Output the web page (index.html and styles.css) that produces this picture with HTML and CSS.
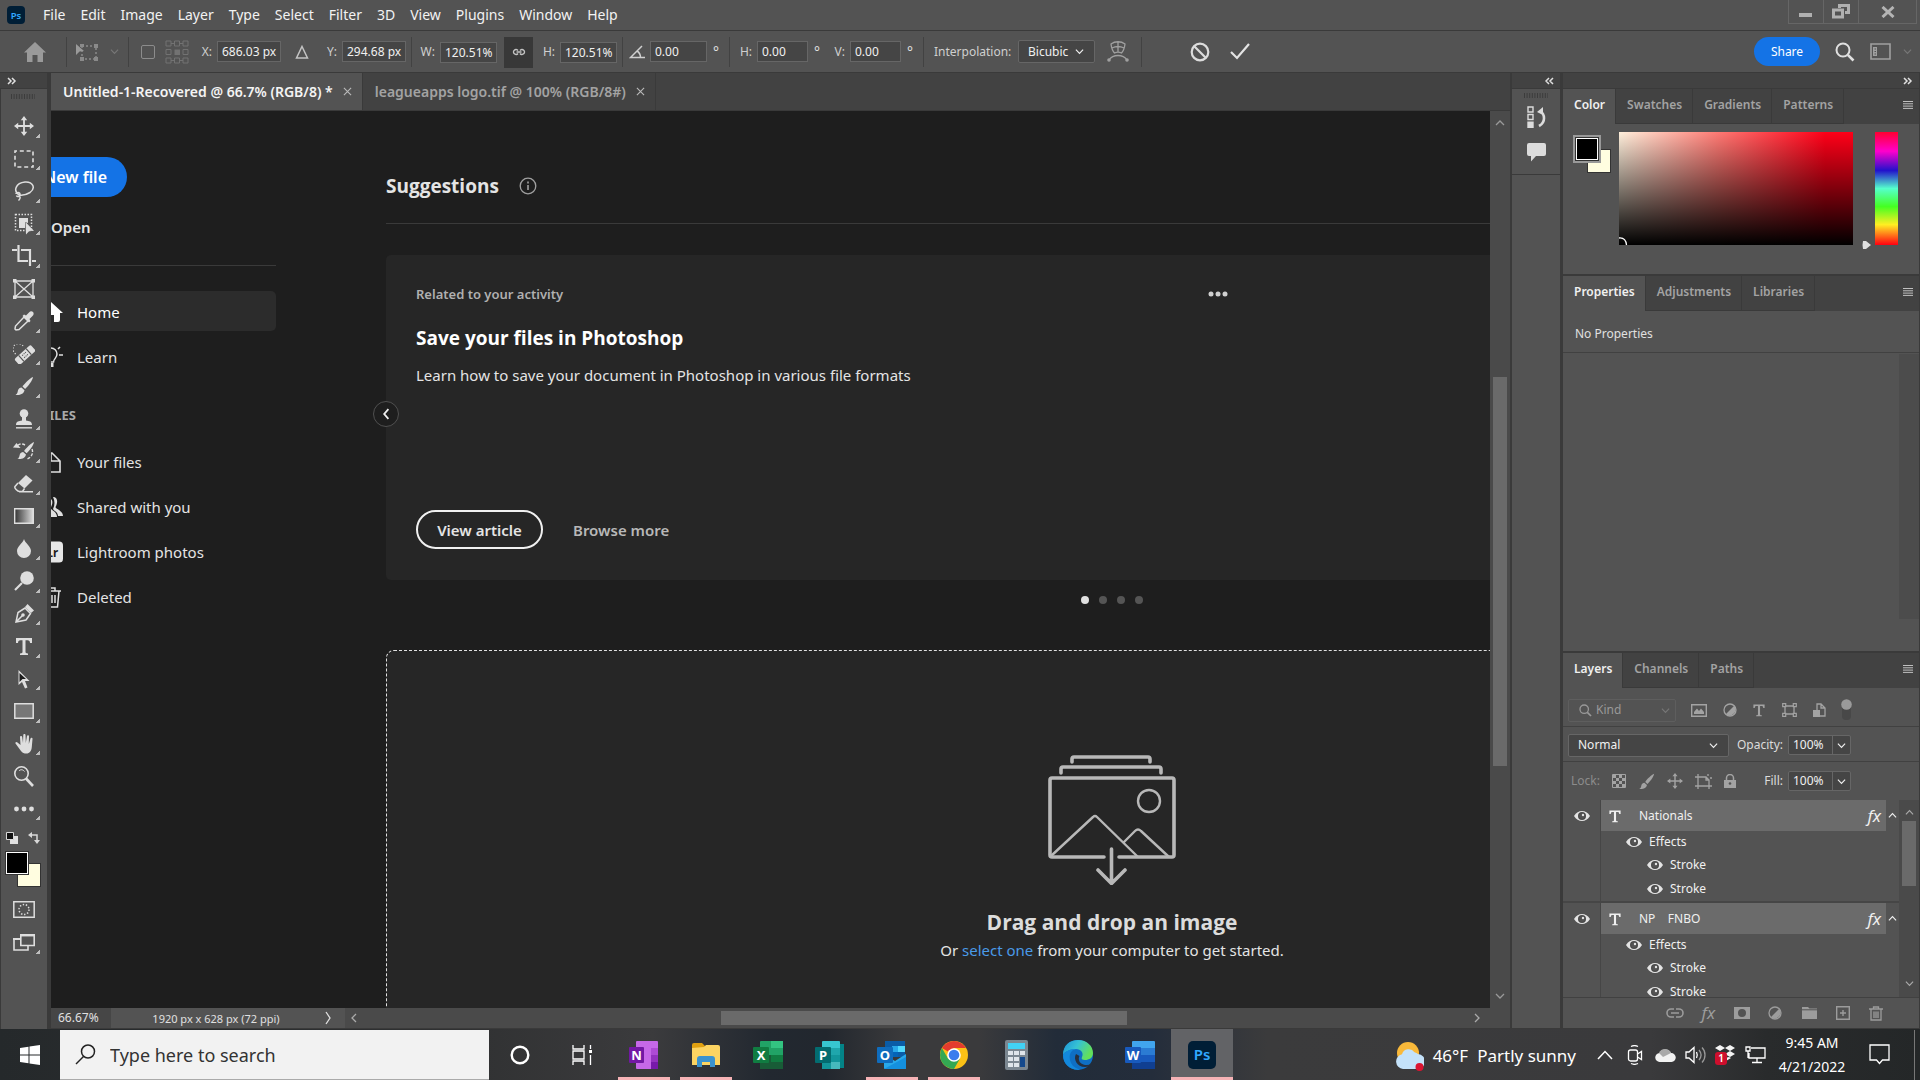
FILE: index.html
```html
<!DOCTYPE html>
<html lang="en">
<head>
<meta charset="utf-8">
<title>Untitled-1-Recovered @ 66.7% (RGB/8) *</title>
<link rel="stylesheet" href="styles.css">
</head>
<body>
<svg class="sprite" aria-hidden="true">
  <symbol id="chev-down" viewBox="0 0 10 10"><path d="M1 3l4 4 4-4" fill="none" stroke="currentColor" stroke-width="1.3"/></symbol>
  <symbol id="chev-up" viewBox="0 0 10 10"><path d="M1 7l4-4 4 4" fill="none" stroke="currentColor" stroke-width="1.3"/></symbol>
  <symbol id="chev-left" viewBox="0 0 10 10"><path d="M7 1L3 5l4 4" fill="none" stroke="currentColor" stroke-width="1.3"/></symbol>
  <symbol id="chev-right" viewBox="0 0 10 10"><path d="M3 1l4 4-4 4" fill="none" stroke="currentColor" stroke-width="1.3"/></symbol>
  <symbol id="dbl-right" viewBox="0 0 10 8"><path d="M1 1l3 3-3 3M5 1l3 3-3 3" fill="none" stroke="currentColor" stroke-width="1.5"/></symbol>
  <symbol id="dbl-left" viewBox="0 0 10 8"><path d="M4 1L1 4l3 3M8 1L5 4l3 3" fill="none" stroke="currentColor" stroke-width="1.5"/></symbol>
  <symbol id="close" viewBox="0 0 10 10"><path d="M1 1l8 8M9 1l-8 8" fill="none" stroke="currentColor" stroke-width="1.2"/></symbol>
  <symbol id="menu" viewBox="0 0 10 8"><path d="M0 .5h10M0 2.8h10M0 5.1h10M0 7.4h10" stroke="currentColor"/></symbol>
  <symbol id="grip" viewBox="0 0 24 5"><path d="M0 2.5h24" stroke="#3c3c3c" stroke-width="5" stroke-dasharray="1 1.6"/></symbol>
  <symbol id="eye" viewBox="0 0 16 12"><path d="M0 6C4-.8 12-.8 16 6c-4 6.800-12 6.800-16 0z" fill="#e4e4e4"/><circle cx="8" cy="6" r="4" fill="#4a4a4a"/><circle cx="8" cy="6" r="2.700" fill="#535353"/><circle cx="9" cy="5" r="1.200" fill="#e4e4e4"/></symbol>
  <symbol id="letter-t" viewBox="0 0 20 20"><path d="M2 2h16v5h-2c0-2-.8-2.800-2.500-2.800h-2V16c0 .9.500 1.300 2.500 1.400V19H6v-1.600c2-.1 2.500-.5 2.500-1.400V4.200h-2C4.800 4.200 4 5 4 7H2z" fill="currentColor"/></symbol>
  <symbol id="search" viewBox="0 0 20 20"><circle cx="8" cy="8" r="6.500" fill="none" stroke="currentColor" stroke-width="2"/><path d="M12.800 12.800L18.500 18.500" stroke="currentColor" stroke-width="2.600"/></symbol>
  <symbol id="adjust" viewBox="0 0 14 14"><circle cx="7" cy="7" r="6" fill="none" stroke="currentColor" stroke-width="1.300"/><path d="M11.200 2.800A6 6 0 0 1 2.800 11.200z" fill="currentColor"/></symbol>
  <symbol id="move" viewBox="0 0 20 20"><path d="M10 2v16M2 10h16" stroke="currentColor" stroke-width="1.800"/><path d="M10 0l3.200 4.200H6.800zM10 20l3.200-4.200H6.800zM0 10l4.200-3.200v6.400zM20 10l-4.200-3.200v6.400z" fill="currentColor"/></symbol>
  <symbol id="brush" viewBox="0 0 20 20"><path d="M19 1c-3 1-8.500 6.500-10.500 9.500l2.600 2.400C14 10.500 18.500 4.500 19 1z" fill="currentColor"/><path d="M7.500 11.500l3 2.700C10 18 5.500 19.500 1.500 18.800c2-1 2-2.500 2.500-4.500.4-1.700 2-2.800 3.500-2.800z" fill="currentColor"/></symbol>
</svg>

<header class="menubar">
  <svg class="app-badge" viewBox="0 0 18 18"><rect width="18" height="18" rx="4" fill="#001e36"/><text x="9" y="12.500" text-anchor="middle" class="badge-text" font-size="9.500">Ps</text></svg>
  <nav class="menu">
    <a href="#">File</a><a href="#">Edit</a><a href="#">Image</a><a href="#">Layer</a><a href="#">Type</a><a href="#">Select</a><a href="#">Filter</a><a href="#">3D</a><a href="#">View</a><a href="#">Plugins</a><a href="#">Window</a><a href="#">Help</a>
  </nav>
  <div class="window-controls">
    <button aria-label="Minimize"><svg width="14" height="14" viewBox="0 0 14 14"><rect x="0" y="8" width="13" height="4" fill="#b0b0b0"/></svg></button>
    <button aria-label="Restore"><svg width="18" height="15" viewBox="0 0 18 15"><path d="M7.500 4V1.500h9v7H13M1.500 6h9v7h-9z" fill="none" stroke="#b0b0b0" stroke-width="3"/></svg></button>
    <button class="wide" aria-label="Close"><svg width="14" height="12" viewBox="0 0 14 12"><path d="M1.500 1l11 10M12.500 1l-11 10" stroke="#b4b4b4" stroke-width="3"/></svg></button>
  </div>
</header>

<form class="options">
  <div class="opt-group opt-home"><button type="button" class="plain" aria-label="Home"><svg width="22" height="20" viewBox="0 0 22 20"><path d="M11 0l11 10.500h-3V20h-5.500v-7h-5v7H3v-9.500H0z" fill="#9a9a9a"/></svg></button></div>
  <div class="opt-group opt-tool">
    <svg width="22" height="18" viewBox="0 0 22 18"><path d="M6 3h14v13H6z" fill="none" stroke="#8a8a8a" stroke-width="1.500" stroke-dasharray="2 2"/><path d="M0 1l8 7-4.500.5L0 12z" fill="#9a9a9a"/><path d="M4 1h4v3H4zM18 1h4v4h-4zM18 14h4v4h-4zM4 14h4v4H4z" fill="#8a8a8a"/></svg>
    <svg class="dim" width="9" height="9"><use href="#chev-down"/></svg>
  </div>
  <div class="opt-group opt-ref">
    <input type="checkbox" aria-label="Toggle reference point">
    <svg width="24" height="24" viewBox="0 0 24 24"><g fill="none" stroke="#727272"><path d="M1 1h5v5H1zM9.500 1h5v5h-5zM18 1h5v5h-5zM1 9.500h5v5H1zM18 9.500h5v5h-5zM1 18h5v5H1zM9.500 18h5v5h-5zM18 18h5v5h-5zM6 3.500h3.500M14.500 3.500H18M6 20.500h3.500M14.500 20.500H18"/></g><path d="M9.500 9.500h5.500v5.500H9.500z" fill="#727272"/></svg>
    <label for="px">X:</label><input id="px" type="text" value="686.03 px">
    <svg width="14" height="14" viewBox="0 0 14 14"><path d="M7 1.500L12.500 13h-11z" fill="none" stroke="#c4c4c4" stroke-width="1.500"/></svg>
    <label for="py">Y:</label><input id="py" type="text" value="294.68 px">
  </div>
  <div class="opt-group opt-scale">
    <label for="sw">W:</label><input id="sw" type="text" value="120.51%">
    <button type="button" class="link-btn" aria-label="Maintain aspect ratio"><svg width="14" height="8" viewBox="0 0 14 8"><path d="M6 2.500A2.500 2.500 0 1 0 6 5.500M8 2.500a2.500 2.500 0 1 1 0 3M4.500 4h5" fill="none" stroke="#c4c4c4" stroke-width="1.400"/></svg></button>
    <label for="sh">H:</label><input id="sh" type="text" value="120.51%">
  </div>
  <div class="opt-group opt-angle">
    <svg width="16" height="14" viewBox="0 0 16 14"><path d="M13 1L1.500 12.500H16M8 6c2.500 1.500 3.500 4 3.500 6.500" fill="none" stroke="#d0d0d0" stroke-width="1.500"/></svg>
    <input type="text" value="0.00" aria-label="Angle"><span>°</span>
  </div>
  <div class="opt-group opt-skew">
    <label for="kh">H:</label><input id="kh" type="text" value="0.00"><span>°</span>
    <label for="kv">V:</label><input id="kv" type="text" value="0.00"><span>°</span>
  </div>
  <div class="opt-group opt-interp">
    <label for="interp">Interpolation:</label>
    <div class="select"><select id="interp"><option>Bicubic</option></select><svg width="9" height="9"><use href="#chev-down"/></svg></div>
    <svg width="22" height="21" viewBox="0 0 22 21"><g fill="none" stroke="#a0a0a0" stroke-width="1.300"><path d="M4 3c4-3 10-3 14 0-.5 4-1.500 7-3.500 9-2-1-5-1-7 0C5.500 10 4.500 7 4 3zM11 1v10.500M5 7c4-2 8-2 12 0M2 19c4-6 14-6 18 0"/></g><circle cx="2" cy="19" r="1.800" fill="#a0a0a0"/><circle cx="20" cy="19" r="1.800" fill="#a0a0a0"/></svg>
  </div>
  <div class="opt-group opt-commit">
    <button type="button" class="plain" aria-label="Cancel transform"><svg width="20" height="20" viewBox="0 0 20 20"><circle cx="10" cy="10" r="8.300" fill="none" stroke="#dcdcdc" stroke-width="2.200"/><path d="M4 4l12 12" stroke="#dcdcdc" stroke-width="2.200"/></svg></button>
    <button type="button" class="plain" aria-label="Commit transform"><svg width="20" height="17" viewBox="0 0 20 17"><path d="M1 9l6 6L19 1" fill="none" stroke="#e4e4e4" stroke-width="2.200"/></svg></button>
  </div>
  <div class="opt-end">
    <button type="button" class="share">Share</button>
    <button type="button" class="plain light" aria-label="Search"><svg width="20" height="20"><use href="#search"/></svg></button>
    <button type="button" class="plain workspace-btn" aria-label="Workspace"><svg width="21" height="17" viewBox="0 0 21 17"><path d="M1 1h19v15H1z" fill="none" stroke="#a0a0a0" stroke-width="1.600"/><path d="M3 4h4v9H3z" fill="#a0a0a0"/><path d="M4.500 6h1.500M4.500 8.500h1.500M4.500 11h1.500" stroke="#535353"/></svg><svg class="dim" width="9" height="9"><use href="#chev-down"/></svg></button>
  </div>
</form>

<div class="workspace">
  <aside class="toolbar">
    <div class="strip"><svg width="10" height="8"><use href="#dbl-right"/></svg></div>
    <div class="toolbox">
      <svg class="grip" width="24" height="5"><use href="#grip"/></svg>
      <ul class="tools">
        <li class="fly"><svg width="20" height="20"><use href="#move"/></svg></li>
        <li class="fly"><svg width="20" height="18" viewBox="0 0 20 18"><path d="M1 1h18v16H1z" fill="none" stroke="currentColor" stroke-width="1.600" stroke-dasharray="4 2.800" stroke-dashoffset="2"/></svg></li>
        <li class="fly"><svg width="20" height="20" viewBox="0 0 20 20"><path d="M5 14C-1 10 1.500 2 11 1c8-.5 11 6 5 10.500-4 2.500-8 3-11 2.500M2 13c0-2 4-2 4 .5S3 16 2.500 14.500M5 15c2 1 1 3-.5 4.500" fill="none" stroke="currentColor" stroke-width="1.500"/></svg></li>
        <li class="fly"><svg width="20" height="22" viewBox="0 0 20 22"><path d="M1.500 1.500h16v16h-16z" fill="none" stroke="currentColor" stroke-width="1.500" stroke-dasharray="1.500 1.500"/><path d="M5 5h9v5l-3-1v6H5z" fill="currentColor"/><path d="M11.500 9l8.500 9-4.500-.3L12 21.500z" fill="currentColor"/></svg></li>
        <li class="fly"><svg width="24" height="22" viewBox="0 0 24 22"><path d="M6.500 0v16H16M0 5h5M9 5h9v16M20 16h4" fill="none" stroke="currentColor" stroke-width="2.200"/></svg></li>
        <li><svg width="22" height="20" viewBox="0 0 22 20"><path d="M2 2h18v16H2zM2 2l18 16M20 2L2 18" fill="none" stroke="currentColor" stroke-width="1.300"/><path d="M0 0h3.500v3.500H0zM18.500 0H22v3.500h-3.500zM0 16.500h3.500V20H0zM18.500 16.500H22V20h-3.500z" fill="currentColor"/></svg></li>
        <li class="fly"><svg width="20" height="20" viewBox="0 0 20 20"><path d="M10 6l4 4-9 8.500-3 .5-1-1 .5-3z" fill="none" stroke="currentColor" stroke-width="1.500"/><path d="M8.500 5l1.500-1.500 2 1L15 1.500C16 0 18-.2 19 1s.8 3-.5 4L15.500 8l1 2L15 11.500z" fill="currentColor"/></svg></li>
        <li class="fly"><svg width="22" height="20" viewBox="0 0 22 20"><path d="M10 2A5.500 5.500 0 1 0 3 10" fill="none" stroke="currentColor" stroke-width="1.300" stroke-dasharray="1.200 1.800"/><g transform="rotate(-42 12 11)"><rect x="1" y="7" width="22" height="8" rx="2" fill="currentColor"/><path d="M7 7v8M17 7v8" stroke="#535353" stroke-width="1.200"/><path d="M9.500 9.500h5M9.500 12.500h5" stroke="#535353" stroke-dasharray="1.200 .8"/></g></svg></li>
        <li class="fly"><svg width="20" height="20"><use href="#brush"/></svg></li>
        <li class="fly"><svg width="18" height="20" viewBox="0 0 18 20"><circle cx="9" cy="4.500" r="4.300" fill="currentColor"/><path d="M7 8h4v3.500c3 .8 6 .5 6 4.500H1c0-4 3-3.700 6-4.500z" fill="currentColor"/><path d="M1 18.800h16" stroke="currentColor" stroke-width="1.400"/></svg></li>
        <li class="fly"><svg width="22" height="20" viewBox="0 0 22 20"><g transform="translate(3 0)"><use href="#brush" width="19" height="19"/></g><path d="M12 4C8 2 5 3 4 6M19 8c1.500 4 0 8-5 10" fill="none" stroke="currentColor" stroke-width="1.400" stroke-dasharray="3 1.500"/><path d="M0 6.500L3.500 2l4 5z" fill="currentColor"/></svg></li>
        <li class="fly"><svg width="20" height="18" viewBox="0 0 20 18"><path d="M12 0l6.500 5.500-8 8L4 8z" fill="currentColor"/><path d="M4 8L1 11.500c-1 1.500 2.500 5 4.500 5h3l2-3M5 16.700h14" fill="none" stroke="currentColor" stroke-width="1.500"/></svg></li>
        <li class="fly"><svg width="20" height="16" viewBox="0 0 20 16"><defs><linearGradient id="gr"><stop stop-color="#333"/><stop offset="1" stop-color="#ddd"/></linearGradient></defs><path d="M.7.700h18.600v14.600H.7z" fill="url(#gr)" stroke="currentColor" stroke-width="1.400"/></svg></li>
        <li class="fly"><svg width="14" height="19" viewBox="0 0 14 19"><path d="M7 0c1 4 7 7.500 7 12a7 7 0 0 1-14 0C0 7.500 6 4 7 0z" fill="currentColor"/></svg></li>
        <li class="fly"><svg width="20" height="20" viewBox="0 0 20 20"><circle cx="13" cy="7" r="6.800" fill="currentColor"/><path d="M8 12l-7 7" stroke="currentColor" stroke-width="2.200"/></svg></li>
        <li class="fly"><svg width="20" height="20" viewBox="0 0 20 20"><path d="M2 18L4 8.500l7-4.500 5.500 5.500L12 16zM2 18l6.500-6.500" fill="none" stroke="currentColor" stroke-width="1.500"/><circle cx="9" cy="11" r="1.800" fill="currentColor"/><path d="M11 3l2.500-3L20 6.500l-3 2.500z" fill="currentColor"/></svg></li>
        <li class="fly"><svg width="20" height="20"><use href="#letter-t"/></svg></li>
        <li class="fly"><svg width="14" height="20" viewBox="0 0 14 20"><path d="M1.500 1v15l3.500-3 3 6.500 2.500-1L8 12h4.500z" fill="currentColor"/><path d="M2.500 4v9l3-3H9z" fill="#1c1c1c"/></svg></li>
        <li class="fly"><svg width="20" height="16" viewBox="0 0 20 16"><path d="M.8.800h18.400v14.400H.8z" fill="#777" stroke="currentColor" stroke-width="1.500"/></svg></li>
        <li class="fly"><svg width="19" height="20" viewBox="0 0 19 20"><path d="M6 17L.5 9.500C0 8 1.500 7.500 2.500 8.500L5.500 11 5 3c0-1.500 2-1.500 2.200 0L8 9l.3-8c0-1.300 2.200-1.300 2.200 0l.3 8L12 2c.2-1.300 2.100-1 2 .3L13.800 10l1.700-5.500c.4-1.200 2.200-.8 2 .5L16.800 13c-.3 4-2.300 6.500-5.300 6.500-2.500 0-4-.5-5.500-2.500z" fill="currentColor"/></svg></li>
        <li><svg width="20" height="21" viewBox="0 0 20 21"><circle cx="7.500" cy="7.500" r="6.700" fill="none" stroke="currentColor" stroke-width="1.600"/><path d="M5 5c1.500-2 4-1.500 5.500.5" fill="none" stroke="currentColor"/><path d="M12 12.500l7 7.500" stroke="currentColor" stroke-width="2.600"/></svg></li>
        <li class="fly"><svg width="20" height="6" viewBox="0 0 20 6"><g fill="currentColor"><circle cx="2.500" cy="3" r="2.400"/><circle cx="10" cy="3" r="2.400"/><circle cx="17.500" cy="3" r="2.400"/></g></svg></li>
      </ul>
      <div class="swap-row">
        <svg width="12" height="12" viewBox="0 0 12 12"><path d="M4 4h8v8H4z" fill="#e0e0e0"/><path d="M.5.500h7v7h-7z" fill="#111" stroke="#d8d8d8"/></svg>
        <svg width="12" height="12" viewBox="0 0 12 12"><path d="M2 3h7v7" fill="none" stroke="#d8d8d8" stroke-width="1.500"/><path d="M0 3l4-3v6zM9 12L6 8h6z" fill="#d8d8d8"/></svg>
      </div>
      <div class="swatches"><span class="bg"></span><span class="fg"></span></div>
      <ul class="modes">
        <li><svg width="22" height="17" viewBox="0 0 22 17"><path d="M.8.800h20.400v15.400H.8z" fill="none" stroke="currentColor" stroke-width="1.500"/><circle cx="11" cy="8.500" r="5" fill="none" stroke="currentColor" stroke-width="1.500" stroke-dasharray="1.400 1.700"/></svg></li>
        <li class="fly"><svg width="22" height="17" viewBox="0 0 22 17"><path d="M7 5H1v11h14v-4" fill="none" stroke="currentColor" stroke-width="1.600"/><path d="M7.800 1.500h13.400v10H7.800z" fill="none" stroke="currentColor" stroke-width="1.600"/><path d="M7 1.200h15M0 5h7" stroke="currentColor" stroke-width="2.200"/></svg></li>
      </ul>
    </div>
  </aside>

  <main class="document">
    <div class="doc-tabs">
      <div class="doc-tab active"><span>Untitled-1-Recovered @ 66.7% (RGB/8) *</span><button class="plain" aria-label="Close tab"><svg width="9" height="9"><use href="#close"/></svg></button></div>
      <div class="doc-tab"><span>leagueapps logo.tif @ 100% (RGB/8#)</span><button class="plain" aria-label="Close tab"><svg width="9" height="9"><use href="#close"/></svg></button></div>
    </div>
    <div class="doc-view">
      <div class="canvas">
        <nav class="home-nav">
          <button class="new-file">New file</button>
          <button class="open-file">Open</button>
          <hr>
          <a class="current" href="#"><svg width="24" height="20" viewBox="0 0 24 20"><path d="M12 0l12 11h-3v7q0 2-2 2h-4v-7H9v7H5q-2 0-2-2v-7H0z" fill="#fff"/></svg>Home</a>
          <a href="#"><svg width="24" height="22" viewBox="0 0 24 22"><path d="M9.500 16c0-3-3.500-4-3.500-8a6 6 0 0 1 12 0c0 4-3.500 5-3.500 8z" fill="none" stroke="#e0e0e0" stroke-width="1.500"/><path d="M9.500 17h5v4h-5z" fill="#e0e0e0"/><path d="M19 3l2-2M20 9h4" stroke="#e0e0e0" stroke-width="1.600"/></svg>Learn</a>
          <h2>FILES</h2>
          <a href="#"><svg width="24" height="21" viewBox="0 0 24 21"><path d="M4 1h9l8 8v11H4zM12 1v8h9" fill="none" stroke="#e0e0e0" stroke-width="1.600"/></svg>Your files</a>
          <a href="#"><svg width="24" height="20" viewBox="0 0 24 20"><path d="M14 0c5 0 5 6 2.500 10 0 2 7.500 3.500 7.500 9h-5c0-4-4-5-5-7 2-4 2-8 0-12z" fill="#e0e0e0"/><path d="M8 1c7 0 6 6 3.500 10 0 2 6.500 3 6.500 9H0c0-6 4-7 4-9C1 7 2 1 8 1z" fill="#e0e0e0"/></svg>Shared with you</a>
          <a href="#"><svg width="25" height="22" viewBox="0 0 25 22"><rect width="25" height="22" rx="4" fill="#e6e6e6"/><text x="20" y="16" text-anchor="end" class="lr-text">Lr</text></svg>Lightroom photos</a>
          <a href="#"><svg width="24" height="21" viewBox="0 0 24 21"><path d="M4 4h18M9 4V1h7v3M5.500 4l1 16h12l1.500-16M10 8v8M13 8v8M16 8v8" fill="none" stroke="#e0e0e0" stroke-width="1.500"/></svg>Deleted</a>
        </nav>
        <section class="home-main">
          <div class="suggest-head"><h1>Suggestions</h1><svg width="18" height="18" viewBox="0 0 18 18"><circle cx="9" cy="9" r="7.800" fill="none" stroke="#a0a0a0" stroke-width="1.300"/><path d="M9 8v5M9 4.500v2" stroke="#a0a0a0" stroke-width="1.600"/></svg></div>
          <article class="card">
            <button class="prev" aria-label="Previous"><svg width="12" height="12" viewBox="0 0 10 10"><path d="M7 1L3.500 5 7 9" fill="none" stroke="#f0f0f0" stroke-width="1.500"/></svg></button>
            <div class="card-top"><span>Related to your activity</span><button class="plain" aria-label="More"><svg width="20" height="6" viewBox="0 0 20 6"><g fill="#d0d0d0"><circle cx="3" cy="3" r="2.500"/><circle cx="10" cy="3" r="2.500"/><circle cx="17" cy="3" r="2.500"/></g></svg></button></div>
            <h2>Save your files in Photoshop</h2>
            <p>Learn how to save your document in Photoshop in various file formats</p>
            <div class="card-actions"><button class="outline">View article</button><button class="quiet">Browse more</button></div>
          </article>
          <div class="pager"><i class="on"></i><i></i><i></i><i></i></div>
          <div class="dropzone">
            <svg width="128" height="130" viewBox="0 0 128 130"><g fill="none" stroke="#b8b8b8" stroke-linecap="round" stroke-linejoin="round" stroke-width="3.600"><path d="M24 7V4q0-2 2-2h74q2 0 2 2v3M13 18v-4q0-2 2-2h96q2 0 2 2v4"/><path d="M56 102H4q-2 0-2-2V25q0-2 2-2h120q2 0 2 2v75q0 2-2 2H71"/><path d="M63.500 94v34M50 115l13.500 13.500L77 115"/></g><g fill="none" stroke="#b8b8b8" stroke-width="2.400" stroke-linejoin="round"><circle cx="101" cy="46" r="11"/><path d="M3 101L45 62q2-2 4 0l41 40M76 87l11-11q3-3 6 0l28 26"/></g></svg>
            <h2>Drag and drop an image</h2>
            <p>Or <a href="#">select one</a> from your computer to get started.</p>
          </div>
        </section>
      </div>
      <div class="vscroll"><svg width="10" height="10"><use href="#chev-up"/></svg><div class="vtrack"><div class="vthumb"></div></div><svg width="10" height="10"><use href="#chev-down"/></svg></div>
    </div>
    <div class="statusbar">
      <span class="zoom">66.67%</span><span class="info">1920 px x 628 px (72 ppi)</span><span class="more"><svg width="9" height="14" viewBox="0 0 9 14"><path d="M2 1l4 6-4 6" fill="none" stroke="currentColor" stroke-width="1.300"/></svg></span>
      <div class="hscroll"><svg width="10" height="10"><use href="#chev-left"/></svg><div class="htrack"><div class="hthumb"></div></div><svg width="10" height="10"><use href="#chev-right"/></svg></div>
    </div>
  </main>

  <aside class="dock">
    <div class="strip end"><svg width="10" height="8"><use href="#dbl-left"/></svg></div>
    <div class="dock-icons">
      <svg width="24" height="5"><use href="#grip"/></svg>
      <svg width="19" height="22" viewBox="0 0 19 22"><path d="M1 1h5v5H1zM1 8.500h5v5H1z" fill="none" stroke="#dcdcdc" stroke-width="1.400"/><path d="M.3 15.500h6.400V22H.3z" fill="#dcdcdc"/><path d="M12 20c7-4 6-12 1-15" fill="none" stroke="#dcdcdc" stroke-width="2.600"/><path d="M10 6l6-5v8z" fill="#dcdcdc"/></svg>
      <svg width="19" height="19" viewBox="0 0 19 19"><path d="M2 0h15q2 0 2 2v9q0 2-2 2h-8l-5 5.500V13H2q-2 0-2-2V2q0-2 2-2z" fill="#dcdcdc"/></svg>
    </div>
    <div class="dock-rest"></div>
  </aside>

  <aside class="panels">
    <div class="strip end"><svg width="10" height="8"><use href="#dbl-right"/></svg></div>
    <section class="panel color-panel">
      <div class="tabs"><button class="active">Color</button><button>Swatches</button><button>Gradients</button><button>Patterns</button><svg width="10" height="8"><use href="#menu"/></svg></div>
      <div class="color-body">
        <div class="swatches framed"><span class="bg"></span><span class="fg"></span></div>
        <div class="ramp"><svg width="9" height="8" viewBox="0 0 9 8"><path d="M0 1c5-.5 7 2 7.500 7" fill="none" stroke="#fff" stroke-width="1.300"/></svg></div>
        <svg class="hue-pointer" width="10" height="10" viewBox="0 0 10 10"><path d="M1 1h3l5 4-5 4H1q-1-4 0-8z" fill="#e0e0e0"/></svg>
        <div class="hue"></div>
      </div>
    </section>
    <section class="panel props-panel">
      <div class="tabs"><button class="active">Properties</button><button>Adjustments</button><button>Libraries</button><svg width="10" height="8"><use href="#menu"/></svg></div>
      <p>No Properties</p>
      <div class="props-body"><div></div></div>
    </section>
    <section class="panel layers-panel">
      <div class="tabs"><button class="active">Layers</button><button>Channels</button><button>Paths</button><svg width="10" height="8"><use href="#menu"/></svg></div>
      <div class="filter-row">
        <div class="kind"><svg width="13" height="13"><use href="#search"/></svg><select aria-label="Filter kind"><option>Kind</option></select><svg width="9" height="9"><use href="#chev-down"/></svg></div>
        <div class="icons">
          <svg width="16" height="13" viewBox="0 0 16 13"><path d="M.7.700h14.600v11.600H.7z" fill="none" stroke="currentColor" stroke-width="1.400"/><path d="M3 10V8l3-3.500L8 7l2-2.500L13 8v2z" fill="currentColor"/></svg>
          <svg width="14" height="14"><use href="#adjust"/></svg>
          <svg width="14" height="14"><use href="#letter-t"/></svg>
          <svg width="15" height="14" viewBox="0 0 15 14"><path d="M3 3h9v8H3z" fill="none" stroke="currentColor" stroke-width="1.300"/><path d="M.7.700h3v3h-3zM11.300.700h3v3h-3zM.7 10.300h3v3h-3zM11.300 10.300h3v3h-3z" fill="#535353" stroke="currentColor" stroke-width="1.200"/></svg>
          <svg width="14" height="14" viewBox="0 0 14 14"><path d="M5 7V1h4l4 4v8H8M9 1v4h4" fill="none" stroke="currentColor" stroke-width="1.300"/><path d="M1 7h7v7H1z" fill="currentColor"/></svg>
        </div>
        <svg width="11" height="22" viewBox="0 0 11 22"><rect x="1" y="4" width="9" height="17" rx="4" fill="#484848"/><circle cx="5.500" cy="5.500" r="5.300" fill="#9a9a9a"/></svg>
      </div>
      <div class="blend-row">
        <div class="select"><select aria-label="Blend mode"><option>Normal</option></select><svg width="9" height="9"><use href="#chev-down"/></svg></div>
        <label for="opacity">Opacity:</label>
        <div class="combo"><input id="opacity" type="text" value="100%"><button aria-label="Opacity slider"><svg width="9" height="9"><use href="#chev-down"/></svg></button></div>
      </div>
      <div class="lock-row">
        <span>Lock:</span>
        <div class="icons">
          <svg width="14" height="14" viewBox="0 0 14 14"><path d="M.5.500h13v13H.5z" fill="none" stroke="currentColor"/><path d="M1 1h3v3H1zM7 1h3v3H7zM4 4h3v3H4zM10 4h3v3h-3zM1 7h3v3H1zM7 7h3v3H7zM4 10h3v3H4zM10 10h3v3h-3z" fill="currentColor"/></svg>
          <svg width="17" height="17"><use href="#brush"/></svg>
          <svg width="16" height="16"><use href="#move"/></svg>
          <svg width="17" height="15" viewBox="0 0 17 15"><path d="M3 0v15M0 3h11l3 3v9M0 12h17M11 3v3h3" fill="none" stroke="currentColor" stroke-width="1.300"/><path d="M13 0v2M15 4h2" stroke="currentColor" stroke-width="1.300"/></svg>
          <svg width="12" height="14" viewBox="0 0 12 14"><path d="M0 6h12v8H0z" fill="currentColor"/><path d="M2.500 6V4a3.500 3.500 0 0 1 7 0v2" fill="none" stroke="currentColor" stroke-width="1.500"/><circle cx="6" cy="9.500" r="1.300" fill="#535353"/></svg>
        </div>
        <label for="fill">Fill:</label>
        <div class="combo"><input id="fill" type="text" value="100%"><button aria-label="Fill slider"><svg width="9" height="9"><use href="#chev-down"/></svg></button></div>
      </div>
      <div class="layers">
        <ul class="layer-list">
          <li class="layer">
            <div class="vis"><svg width="16" height="12"><use href="#eye"/></svg></div>
            <div class="layer-body">
              <div class="layer-row"><svg width="14" height="14"><use href="#letter-t"/></svg><span>Nationals</span><em>fx</em><svg class="caret" width="9" height="9"><use href="#chev-up"/></svg></div>
              <div class="fx-row head"><svg width="16" height="12"><use href="#eye"/></svg>Effects</div>
              <div class="fx-row"><svg width="16" height="12"><use href="#eye"/></svg>Stroke</div>
              <div class="fx-row"><svg width="16" height="12"><use href="#eye"/></svg>Stroke</div>
            </div>
          </li>
          <li class="layer">
            <div class="vis"><svg width="16" height="12"><use href="#eye"/></svg></div>
            <div class="layer-body">
              <div class="layer-row"><svg width="14" height="14"><use href="#letter-t"/></svg><span>NP    FNBO</span><em>fx</em><svg class="caret" width="9" height="9"><use href="#chev-up"/></svg></div>
              <div class="fx-row head"><svg width="16" height="12"><use href="#eye"/></svg>Effects</div>
              <div class="fx-row"><svg width="16" height="12"><use href="#eye"/></svg>Stroke</div>
              <div class="fx-row"><svg width="16" height="12"><use href="#eye"/></svg>Stroke</div>
            </div>
          </li>
        </ul>
        <div class="list-scroll"><svg width="9" height="9"><use href="#chev-up"/></svg><div></div><svg width="9" height="9"><use href="#chev-down"/></svg></div>
      </div>
      <div class="layer-actions">
        <button class="plain" aria-label="Link layers"><svg width="18" height="10" viewBox="0 0 18 10"><path d="M8 1H5a4 4 0 0 0 0 8h3M10 1h3a4 4 0 0 1 0 8h-3M5 5h8" fill="none" stroke="currentColor" stroke-width="1.600"/></svg></button>
        <button class="plain fx" aria-label="Layer style">fx</button>
        <button class="plain" aria-label="Add mask"><svg width="16" height="12" viewBox="0 0 16 12"><path d="M0 0h16v12H0zM8 2a4 4 0 1 0 0 8 4 4 0 1 0 0-8z" fill="currentColor" fill-rule="evenodd"/></svg></button>
        <button class="plain" aria-label="Adjustment layer"><svg width="14" height="14"><use href="#adjust"/></svg></button>
        <button class="plain" aria-label="New group"><svg width="15" height="12" viewBox="0 0 15 12"><path d="M0 0h6l1.500 1.500H15V12H0z" fill="currentColor"/><path d="M0 2.800h15" stroke="#535353"/></svg></button>
        <button class="plain" aria-label="New layer"><svg width="14" height="14" viewBox="0 0 14 14"><path d="M.7.700h12.600v12.600H.7zM7 4v6M4 7h6" fill="none" stroke="currentColor" stroke-width="1.400"/></svg></button>
        <button class="plain" aria-label="Delete layer"><svg width="14" height="15" viewBox="0 0 14 15"><path d="M0 3h14M4.500 3V1h5v2M2 3v11h10V3M5 5.500V12M7 5.500V12M9 5.500V12" fill="none" stroke="currentColor" stroke-width="1.300"/></svg></button>
      </div>
    </section>
  </aside>
</div>

<footer class="taskbar">
  <button class="start" aria-label="Start"><svg width="20" height="20" viewBox="0 0 20 20"><path d="M0 3l8.500-1.300v7.800H0zM9.500 1.500L20 0v9.500H9.500zM0 10.500h8.500v7.800L0 17zM9.500 10.500H20V20L9.500 18.500z" fill="#fff"/></svg></button>
  <label class="search"><svg width="21" height="21" viewBox="0 0 21 21"><circle cx="13" cy="7.500" r="6.500" fill="none" stroke="#222" stroke-width="1.500"/><path d="M8.500 12.500L1 20" stroke="#222" stroke-width="1.500"/></svg><input type="text" placeholder="Type here to search" aria-label="Search"></label>
  <div class="apps">
    <button aria-label="Cortana"><svg width="20" height="20" viewBox="0 0 20 20"><circle cx="10" cy="10" r="8.300" fill="none" stroke="#fff" stroke-width="2.400"/></svg></button>
    <button aria-label="Task view"><svg width="21" height="20" viewBox="0 0 21 20"><path d="M1 0v4h11V0M1 20v-4h11v4M1 6h11v8H1zM18.500 0v4M18.500 10v10" fill="none" stroke="#fff" stroke-width="1.300"/><path d="M17 5h3v3h-3z" fill="#fff"/></svg></button>
    <button class="run" aria-label="OneNote"><svg width="30" height="28" viewBox="0 0 30 28"><rect x="7" width="22" height="28" rx="1" fill="#c668e8"/><path d="M22 7h7v7h-7z" fill="#ae4bd5"/><path d="M22 14h7v7h-7z" fill="#9332bf"/><path d="M22 21h7v7h-7z" fill="#7719aa"/><rect y="6" width="15" height="16" rx="1" fill="#7218a3"/><text x="7.500" y="18.500" class="tile">N</text></svg></button>
    <button class="run" aria-label="File Explorer"><svg width="28" height="24" viewBox="0 0 28 24"><path d="M0 2q0-2 2-2h8l3 3v4H0z" fill="#e0a010"/><path d="M0 5l12-1 2-2h12q2 0 2 2v18H0z" fill="#fcd462"/><path d="M5 24v-8q0-3 3-3h12q3 0 3 3v8h-5v-5h-8v5z" fill="#3b93cf"/></svg></button>
    <button aria-label="Excel"><svg width="30" height="28" viewBox="0 0 30 28"><rect x="7" width="23" height="28" rx="1" fill="#21a366"/><path d="M18 0h12v7H18z" fill="#33c481"/><path d="M7 14h11v7H7z" fill="#185c37"/><path d="M18 14h12v7H18z" fill="#107c41"/><path d="M7 21h23v7H7z" fill="#185c37"/><rect y="6" width="16" height="16" rx="1" fill="#107c41"/><text x="8" y="18.500" class="tile">X</text></svg></button>
    <button aria-label="Publisher"><svg width="30" height="28" viewBox="0 0 30 28"><path d="M20 3h9v24h-9z" fill="#038387"/><rect x="7" width="18" height="28" rx="1" fill="#37c6d0"/><path d="M16 7h9v7h-9z" fill="#1fa6ac"/><path d="M7 14h18v14H7z" fill="#12969b"/><path d="M16 21h9v7h-9z" fill="#46b9bc"/><rect y="6" width="16" height="16" rx="1" fill="#036c70"/><text x="8" y="18.500" class="tile">P</text></svg></button>
    <button class="run" aria-label="Outlook"><svg width="30" height="28" viewBox="0 0 30 28"><rect x="8" width="20" height="16" fill="#0a5ca8"/><path d="M15 5h6v6h-6z" fill="#28a8ea"/><path d="M21 5h7v6h-7z" fill="#50d9ff"/><path d="M15 11h6v5h-6z" fill="#0364b8"/><path d="M7 13l11 7 11-7v14q0 1-1 1H8q-1 0-1-1z" fill="#28a8ea"/><path d="M7 28l22-12v12z" fill="#1490df"/><rect y="6" width="16" height="16" rx="1" fill="#0f6cbd"/><text x="8" y="18.500" class="tile">O</text></svg></button>
    <button class="run" aria-label="Chrome"><svg width="28" height="28" viewBox="0 0 28 28"><circle cx="14" cy="14" r="14" fill="#fbc116"/><path d="M1.900 7A14 14 0 0 0 14 28l6-10.500L8 17.500z" fill="#34a853"/><path d="M1.900 7A14 14 0 0 1 26.100 7H14L8 10.500z" fill="#e33b2e"/><circle cx="14" cy="14" r="6.800" fill="#fff"/><circle cx="14" cy="14" r="5.300" fill="#3b7ded"/></svg></button>
    <button aria-label="Calculator"><svg width="23" height="30" viewBox="0 0 23 30"><rect width="23" height="30" rx="2" fill="#7b8791"/><path d="M3 3h17v6H3z" fill="#42d1f5"/><path d="M3 11h5v4H3zM9 11h5v4H9zM15 11h5v4h-5zM3 17h5v4H3zM9 17h5v4H9zM3 23h5v4H3zM9 23h5v4H9z" fill="#dfe5ea"/><path d="M15 17h5v10h-5z" fill="#14498d"/></svg></button>
    <button aria-label="Edge"><svg width="30" height="30" viewBox="0 0 30 30"><defs><linearGradient id="eg" x2="1" y2=".4"><stop stop-color="#1b8fd8"/><stop offset=".5" stop-color="#36c2d4"/><stop offset="1" stop-color="#63e05a"/></linearGradient></defs><circle cx="15" cy="15" r="15" fill="#0f6fc4"/><path d="M0 15C0 5 7 0 15 0c9 0 15 6 15 13 0 5-4 7-8 7-3 0-4-1-3-3 2-4-1-8-6-8C7 9 1 12 0 15z" fill="url(#eg)"/><path d="M13 14c-3 5 1 13 9 13 3 0 5-1 6-3-4 2-11 1-12-4-.5-2 0-3 .5-4z" fill="#26303f"/><path d="M13 9c-6 1-8 8-5 14 2 4 6 6 9 6.500-9 1.500-17-5-17-14.500 2-4 8-6 13-6z" fill="#1388dc"/></svg></button>
    <button aria-label="Word"><svg width="30" height="28" viewBox="0 0 30 28"><rect x="7" width="23" height="28" rx="1" fill="#41a5ee"/><path d="M7 7h23v7H7z" fill="#2b7cd3"/><path d="M7 14h23v7H7z" fill="#185abd"/><path d="M7 21h23v7H7z" fill="#103f91"/><rect y="6" width="16" height="16" rx="1" fill="#185abd"/><text x="8" y="18.500" class="tile">W</text></svg></button>
    <button class="run focus" aria-label="Photoshop"><svg width="28" height="28" viewBox="0 0 28 28"><rect width="28" height="28" rx="5" fill="#001e36"/><text x="14" y="19" text-anchor="middle" class="badge-text" font-size="15">Ps</text></svg></button>
  </div>
  <div class="tray">
    <a class="weather" href="#"><svg width="28" height="30" viewBox="0 0 28 30"><circle cx="12" cy="12" r="11" fill="#f9b93a"/><path d="M7 28a7.500 7.500 0 0 1-1-14.800 7 7 0 0 1 12.500-2A7 7 0 0 1 22 13a7.500 7.500 0 0 1-1 15z" fill="#c4e2fa"/><circle cx="23.500" cy="26" r="4" fill="#dc1431"/></svg><span>46°F</span><span>Partly sunny</span></a>
    <div class="tray-icons">
      <svg width="16" height="16" viewBox="0 0 16 16"><path d="M1 12l7-7.500 7 7.500" fill="none" stroke="#fff" stroke-width="1.500"/></svg>
      <svg width="16" height="20" viewBox="0 0 16 20"><rect x="1.500" y="5" width="9" height="11" rx="2" fill="none" stroke="#fff" stroke-width="1.300"/><path d="M10.500 9l4-2.500v8l-4-2.500M4 1.500c2-1 5-1 7 0M4 18.500c2 1 5 1 7 0" fill="none" stroke="#fff" stroke-width="1.300"/></svg>
      <svg width="21" height="14" viewBox="0 0 21 14"><path d="M5 14a4.500 4.500 0 0 1-.5-9A6.500 6.500 0 0 1 16 5a4.500 4.500 0 0 1 .5 9z" fill="#f2f2f2"/><path d="M4 5a6.500 6.500 0 0 1 12 0l-8 4z" fill="#a9a9a9"/></svg>
      <svg width="21" height="18" viewBox="0 0 21 18"><path d="M1 6h3l5-4.500v15L4 12H1z" fill="none" stroke="#fff" stroke-width="1.300"/><path d="M11.500 6c1 2 1 4 0 6" fill="none" stroke="#fff" stroke-width="1.300"/><path d="M14 4c2.500 3 2.500 7 0 10M17 1.500c4 4 4 11 0 15" fill="none" stroke="#999" stroke-width="1.300"/></svg>
      <svg width="20" height="22" viewBox="0 0 20 22"><path d="M5 1l5 3-5 3-5-3zM15 1l5 3-5 3-5-3zM15 7l5 3-5 3-5-3zM10 14l4-1 2 1-5 3z" fill="#f4f4f4"/><rect y="8" width="12" height="13" rx="3" fill="#ce0f2d"/><text x="6" y="18" text-anchor="middle" class="badge-num">1</text></svg>
      <svg width="21" height="19" viewBox="0 0 21 19"><path d="M6 3h14v10H4V8M12 13v4M7 17.500h10M1 2h4v4H1zM3 6v7" fill="none" stroke="#fff" stroke-width="1.300"/></svg>
    </div>
    <div class="clock"><span>9:45 AM</span><span>4/21/2022</span></div>
    <button class="notify" aria-label="Notifications"><svg width="21" height="21" viewBox="0 0 21 21"><path d="M1 1h19v15h-6.500l-3 3.500-3-3.500H1z" fill="none" stroke="#fff" stroke-width="1.300"/></svg></button>
  </div>
</footer>
</body>
</html>
```

FILE: styles.css
```css
:root {
  --panel: #535353;
  --dark: #424242;
  --line: #3a3a3a;
  --field: #454545;
  --edge: #666;
  --text: #e0e0e0;
  --muted: #a3a3a3;
}

* { box-sizing: border-box; }

body {
  margin: 0;
  height: 100vh;
  display: flex;
  flex-direction: column;
  overflow: hidden;
  background: var(--panel);
  color: var(--text);
  font: 12px/16px "Noto Sans", "Open Sans", sans-serif;
}

button, input, select { font: inherit; color: inherit; margin: 0; }
button { padding: 0; border: 0; background: none; }
ul { list-style: none; margin: 0; padding: 0; }
h1, h2, p, hr { margin: 0; }
a { color: inherit; text-decoration: none; }
svg { display: block; flex: none; }
.sprite { position: absolute; width: 0; height: 0; }
.plain { display: grid; place-items: center; }
.dim { color: #777; }
.light { color: #e0e0e0; }
.badge-text { font-family: "Noto Sans", sans-serif; font-weight: 600; fill: #31a8ff; }

/* Menu bar */
.menubar {
  display: flex;
  flex: none;
  height: 31px;
  border-bottom: 1px solid var(--line);
}
.app-badge { width: 18px; height: 18px; margin: 6px 18px 0 7px; }
.menu { display: flex; gap: 15px; font-size: 14px; line-height: 29px; color: #f2f2f2; }
.window-controls { display: flex; margin: 0 3px 0 auto; }
.window-controls button {
  display: grid;
  place-items: center;
  width: 35px;
  height: 24px;
  border: solid #666;
  border-width: 0 0 1px 1px;
}
.window-controls .wide { width: 59px; border-right-width: 1px; }

/* Options bar */
.options {
  display: flex;
  flex: none;
  height: 42px;
  align-items: center;
  border-bottom: 1px solid var(--line);
}
.opt-group {
  display: grid;
  height: 30px;
  align-items: center;
  justify-items: center;
  border-right: 1px solid #424242;
}
.opt-group label { justify-self: end; padding-right: 5px; color: #cfcfcf; }
.opt-group span { font-size: 14px; }
.opt-group input[type="text"] {
  width: 100%;
  height: 21px;
  padding: 0 0 0 4px;
  border: 1px solid var(--edge);
  background: var(--field);
  color: #f0f0f0;
}
.opt-group input[type="checkbox"] {
  appearance: none;
  width: 14px;
  height: 14px;
  border: 1px solid #8c8c8c;
  border-radius: 2px;
}
.opt-home { width: 67px; padding-left: 4px; }
.opt-tool { width: 62px; grid-template-columns: 22px 9px; justify-content: center; gap: 12px; }
.opt-ref { padding: 0 5px 0 12px; grid-template-columns: 14px 44px 18px 64px 42px 19px 64px; }
.opt-scale { padding-right: 5px; grid-template-columns: 28px 57px 43px 20px 57px; }
.opt-angle { padding-right: 4px; grid-template-columns: 27px 57px 18px; }
.opt-skew { padding-right: 4px; grid-template-columns: 27px 51px 18px 24px 51px 18px; }
.opt-interp { padding-left: 10px; grid-template-columns: 84px 77px 46px; }
.opt-interp label { justify-self: start; padding: 0; }
.opt-commit { padding-left: 48px; grid-auto-flow: column; gap: 20px; border: 0; }
.link-btn { display: grid; place-items: center; width: 29px; height: 31px; background: #383838; }
.opt-end { display: flex; align-items: center; gap: 15px; margin-left: auto; padding-right: 8px; }
.workspace-btn { display: flex; align-items: center; gap: 12px; }
.share {
  width: 66px;
  height: 29px;
  border-radius: 15px;
  background: #1473e6;
  color: #fff;
}

.select { display: grid; grid-template-columns: 1fr 20px; align-items: center; width: 100%; color: #f0f0f0; }
.select select { grid-area: 1 / 1 / 2 / 3; }
.select svg { grid-area: 1 / 2; pointer-events: none; }
select {
  appearance: none;
  width: 100%;
  height: 23px;
  padding: 0 9px;
  border: 1px solid var(--edge);
  border-radius: 2px;
  background: var(--field);
}

/* Workspace */
.workspace { display: flex; flex: 1; min-height: 0; background: var(--line); }
.strip {
  display: flex;
  flex: none;
  align-items: center;
  height: 15px;
  margin-bottom: 1px;
  padding: 0 7px;
  background: var(--dark);
}
.strip.end { justify-content: flex-end; }

.toolbar { display: flex; flex-direction: column; width: 51px; padding-right: 4px; }
.toolbox { flex: 1; background: var(--panel); border-left: 1px solid var(--line); color: #dedede; }
.grip { margin: 5px 0 11px 10px; }
.tools { display: grid; grid-template-rows: repeat(22, 1fr); height: 715px; }
.toolbox li { position: relative; display: grid; place-items: center; }
.fly::after {
  content: "";
  position: absolute;
  right: 7px;
  bottom: 5px;
  width: 4px;
  height: 4px;
  background: linear-gradient(135deg, transparent 50%, #bdbdbd 50%);
}
.swap-row { display: flex; justify-content: space-between; padding: 7px 7px 7px 5px; }
.swatches { position: relative; width: 36px; height: 36px; margin-left: 4px; }
.swatches span { position: absolute; width: 24px; height: 24px; border: 1px solid #333; }
.swatches .fg { left: 0; top: 0; background: #000; box-shadow: inset 0 0 0 1px #fff; }
.swatches .bg { right: 0; bottom: 0; background: #fffde0; }
.modes { display: grid; grid-template-rows: 33px 33px; padding-top: 6px; }

/* Document window */
.document { display: flex; flex: 1; flex-direction: column; min-width: 0; }
.doc-tabs { display: flex; flex: none; height: 38px; background: var(--dark); border-bottom: 1px solid var(--line); }
.doc-tab {
  display: flex;
  align-items: center;
  gap: 10px;
  padding: 0 10px 0 12px;
  border-right: 1px solid var(--line);
  color: var(--muted);
  font-weight: 600;
  font-size: 14px;
}
.doc-tab button { color: #bbb; }
.doc-tab.active { background: var(--panel); color: #f4f4f4; }
.doc-view { display: flex; flex: 1; min-height: 0; }
.canvas { display: flex; flex: 1; min-width: 0; overflow: hidden; background: #1e1e1e; color: #e4e4e4; font-size: 15px; line-height: 24px; }

.home-nav { flex: none; width: 250px; margin-left: -25px; padding-top: 46px; }
.home-nav button { display: block; font-weight: 600; }
.home-nav .new-file { width: 101px; height: 40px; padding-right: 20px; border-radius: 20px; background: #1473e6; color: #fff; font-size: 16px; text-align: right; }
.open-file { margin: 18px 0 26px 25px; }
.home-nav hr { border: 0; border-top: 1px solid #3a3a3a; margin-bottom: 25px; }
.home-nav a { display: flex; align-items: center; gap: 14px; height: 40px; margin-bottom: 5px; padding: 2px 0 0 13px; border-radius: 5px; }
.home-nav .current { background: #2c2c2c; color: #fff; }
.home-nav h2 { margin: 27px 0 14px 16px; font-size: 13px; color: #aaa; }
.home-nav a svg { width: 24px; }
.lr-text { font: 700 12px "Noto Sans", sans-serif; fill: #1e1e1e; }

.home-main { flex: 0 0 1452px; margin-left: 110px; display: flex; flex-direction: column; }
.home-main h1, .home-main h2 { font-family: "Open Sans", "Noto Sans", sans-serif; font-weight: 700; }
.suggest-head { display: flex; flex: none; align-items: center; gap: 20px; height: 113px; padding-top: 37px; border-bottom: 1px solid #3a3a3a; }
.suggest-head h1 { font-size: 19px; }
.card { position: relative; flex: none; margin-top: 31px; height: 325px; padding: 27px 30px; border-radius: 5px; background: #262626; }
.card-top { display: flex; justify-content: space-between; width: 812px; font-size: 13px; font-weight: 600; color: #b0b0b0; }
.card h2 { margin-top: 19px; font-size: 19px; line-height: 26px; color: #fff; }
.card p { margin-top: 12px; }
.card-actions { display: flex; gap: 30px; margin-top: 123px; font-weight: 600; }
.outline { width: 127px; height: 39px; border: 2px solid #f0f0f0; border-radius: 20px; }
.quiet { color: #b8b8b8; }
.prev {
  position: absolute;
  left: -13px;
  top: 146px;
  display: grid;
  place-items: center;
  width: 26px;
  height: 26px;
  border: 1px solid #505050;
  border-radius: 50%;
  background: #1e1e1e;
}
.pager { display: flex; justify-content: center; gap: 10px; padding: 16px 0; }
.pager i { width: 8px; height: 8px; border-radius: 50%; background: #555; }
.pager .on { background: #e0e0e0; }
.dropzone {
  display: flex;
  flex: none;
  flex-direction: column;
  align-items: center;
  height: 420px;
  margin-top: 30px;
  padding-top: 104px;
  border: 1px dashed #e0e0e0;
  border-radius: 8px;
  background: #262626;
}
.dropzone h2 { margin-top: 21px; font-size: 21px; line-height: 32px; color: #dcdcdc; }
.dropzone a { color: #4a9ae8; }

.vscroll { display: flex; flex: none; flex-direction: column; align-items: center; width: 20px; padding: 7px 0; background: #4a4a4a; color: #999; }
.vtrack { flex: 1; width: 14px; margin: 9px 0; }
.vthumb { height: 46%; margin-top: 240px; background: #6a6a6a; }

.statusbar { display: flex; flex: none; height: 21px; background: #4a4a4a; border-bottom: 1px solid var(--line); }
.statusbar .zoom { width: 60px; padding-left: 7px; background: #464646; line-height: 20px; }
.statusbar .info { width: 200px; padding-left: 10px; text-align: center; background: var(--panel); line-height: 22px; font-size: 11px; }
.statusbar .more { display: grid; place-items: center; width: 34px; background: var(--panel); }
.hscroll { display: flex; flex: 1; align-items: center; padding: 0 28px 0 4px; color: #aaa; }
.htrack { flex: 1; height: 14px; }
.hthumb { width: 36.5%; height: 14px; margin-left: 32.5%; background: #6a6a6a; }

/* Collapsed dock */
.dock { display: flex; flex: none; flex-direction: column; width: 52px; padding: 0 2px; }
.dock .strip { padding-right: 5px; }
.dock-icons { display: flex; flex-direction: column; align-items: center; gap: 8px; height: 85px; margin-bottom: 1px; padding-top: 4px; background: var(--panel); }
.dock-icons svg + svg + svg { margin-top: 7px; }
.dock-rest { flex: 1; background: var(--panel); margin-bottom: 1px; }

/* Panels */
.panels { display: flex; flex: none; flex-direction: column; width: 358px; padding: 0 1px 1px; }
.panels .strip { padding-right: 6px; }
.panel { display: flex; flex: none; flex-direction: column; margin-bottom: 2px; background: var(--panel); }
.tabs { display: flex; flex: none; align-items: center; height: 35px; padding-right: 6px; background: var(--dark); }
.tabs button { height: 100%; padding: 0 10px 3px 11px; border-right: 1px solid var(--line); border-bottom: 1px solid var(--line); color: var(--muted); font-weight: 600; }
.tabs .active { background: var(--panel); border-bottom: 0; color: #f0f0f0; }
.tabs svg { margin: 0 0 3px auto; color: #c0c0c0; }

.color-panel { height: 185px; }
.color-body { display: flex; padding: 8px 21px 0 12px; }
.color-body .swatches { margin: 5px 8px 0 0; }
.framed .fg { outline: 2px solid #999; }
.ramp {
  display: flex;
  flex: 1;
  align-items: flex-end;
  height: 113px;
  background: linear-gradient(to top, #000, transparent), linear-gradient(to right, #fff0dc, #ff7a74 42%, #ff0018 88%);
}
.hue-pointer { align-self: flex-end; margin: 0 3px 0 9px; }
.color-body .hue-pointer { margin-bottom: -5px; }
.hue { width: 23px; height: 113px; background: linear-gradient(#ff0030, #f0c 17%, #21c 34%, #5fc 50%, #4f2 66%, #fe2 82%, #f01); }

.props-panel { height: 375px; }
.props-panel p { height: 42px; padding: 15px 12px 0; border-bottom: 1px solid #414141; }
.props-body { flex: 1; padding: 1px 0 32px; }
.props-body div { width: 20px; height: 100%; margin-left: auto; background: #4c4c4c; }

.layers-panel { flex: 1; min-height: 0; margin-bottom: 0; }
.icons { display: flex; justify-content: space-between; align-items: center; color: #a3a3a3; }
.filter-row, .blend-row, .lock-row { display: flex; flex: none; align-items: center; padding: 0 5px; height: 38px; }
.filter-row { padding-top: 6px; }
.blend-row { height: 36px; padding-top: 2px; border: solid #414141; border-width: 1px 0; }
.kind { display: flex; align-items: center; width: 108px; height: 23px; padding: 0 5px 0 10px; border: 1px solid #5e5e5e; border-radius: 2px; color: #999; }
.kind select { height: 20px; padding: 0 4px; border: 0; background: none; }
.kind svg:last-child { color: #777; }
.filter-row .icons { width: 135px; margin: 0 15px; }
.blend-row .select { width: 161px; }
.blend-row label, .lock-row label { width: 59px; padding-right: 5px; text-align: right; color: #dcdcdc; }
.combo { display: flex; height: 20px; border: 1px solid var(--edge); border-radius: 2px; background: var(--field); color: #f0f0f0; }
.combo input { width: 43px; border: 0; padding: 0 4px; background: none; }
.combo button { width: 18px; border-left: 1px solid var(--edge); display: grid; place-items: center; }
.lock-row span { width: 44px; padding-left: 3px; color: #8c8c8c; }
.lock-row .icons { width: 124px; }
.lock-row label { width: 52px; }

.layers { display: flex; flex: 1; min-height: 0; }
.layer-list { flex: 1; overflow: hidden; }
.layer { display: grid; grid-template-columns: 38px 1fr; height: 103px; border-bottom: 2px solid #464646; color: #f0f0f0; }
.vis { display: grid; justify-content: center; align-items: start; padding-top: 10px; border-right: 1px solid #464646; }
.layer-row { display: flex; align-items: center; height: 31px; background: #6b6b6b; padding-left: 7px; }
.layer-row span { flex: 1; padding-left: 17px; white-space: pre; }
.layer-row em, .fx { font: italic 17px/20px "Noto Sans", sans-serif; }
.layer-row em { margin-right: 5px; }
.layer-row .caret { width: 13px; height: 31px; padding: 0 2px; background: var(--panel); }
.fx-row { display: flex; align-items: center; gap: 7px; height: 24px; padding-left: 46px; }
.fx-row.head { height: 22px; padding-left: 25px; }
.list-scroll { display: flex; flex-direction: column; align-items: center; width: 20px; padding: 8px 0 9px; background: #4a4a4a; color: #aaa; }
.list-scroll div { width: 14px; height: 65px; margin: 4px 0 auto; background: #6a6a6a; }
.layer-actions { display: grid; flex: none; grid-template-columns: repeat(7, 1fr); height: 31px; padding: 0 26px 0 95px; border-top: 1px solid #414141; color: #9c9c9c; }

/* Taskbar */
.taskbar {
  display: flex;
  flex: none;
  height: 51px;
  background: linear-gradient(to right, #25292b, #303132 24%, #3b3b3d 34%, #222830 40%, #22272e 43%, #3a3a3c 47%, #3a3a3c 51%, #222c39 55%, #242d3b 60%, #3b3b3c 66%, #3a3a3c 86%, #292b2c 92%, #242728);
  color: #fff;
}
.start { width: 60px; display: grid; place-items: center; }
.search { display: flex; align-items: center; gap: 14px; width: 429px; margin-top: 1px; padding-left: 15px; background: #f2f2f2; border-bottom: 1px solid #aaa; }
.search input { flex: 1; height: 40px; padding: 0; border: 0; background: none; font-size: 18px; }
.search input::placeholder { color: #333; opacity: 1; }
.apps { display: flex; }
.apps button { position: relative; width: 62px; display: grid; place-items: center; }
.apps .focus { background: #626366; }
.run::after { content: ""; position: absolute; left: 5px; right: 5px; bottom: 0; height: 3px; background: #f6b3b6; }
.focus::after { left: 0; right: 0; }
.tile { font: 700 13px "Noto Sans", sans-serif; fill: #fff; text-anchor: middle; }
.badge-num { font: 600 10px "Noto Sans", sans-serif; fill: #fff; }
.tray { display: flex; align-items: center; margin-left: auto; padding-right: 5px; }
.weather { display: flex; align-items: center; gap: 9px; padding-top: 2px; font-size: 17px; line-height: 24px; white-space: nowrap; }
.tray-icons { display: grid; grid-template-columns: repeat(6, 30px); place-items: center; margin-left: 14px; }
.clock { display: flex; flex-direction: column; width: 84px; padding-top: 1px; font-size: 14px; line-height: 24px; text-align: center; }
.notify { display: grid; place-items: center; width: 61px; height: 50px; padding-right: 10px; border-right: 1px solid #777; }
```
